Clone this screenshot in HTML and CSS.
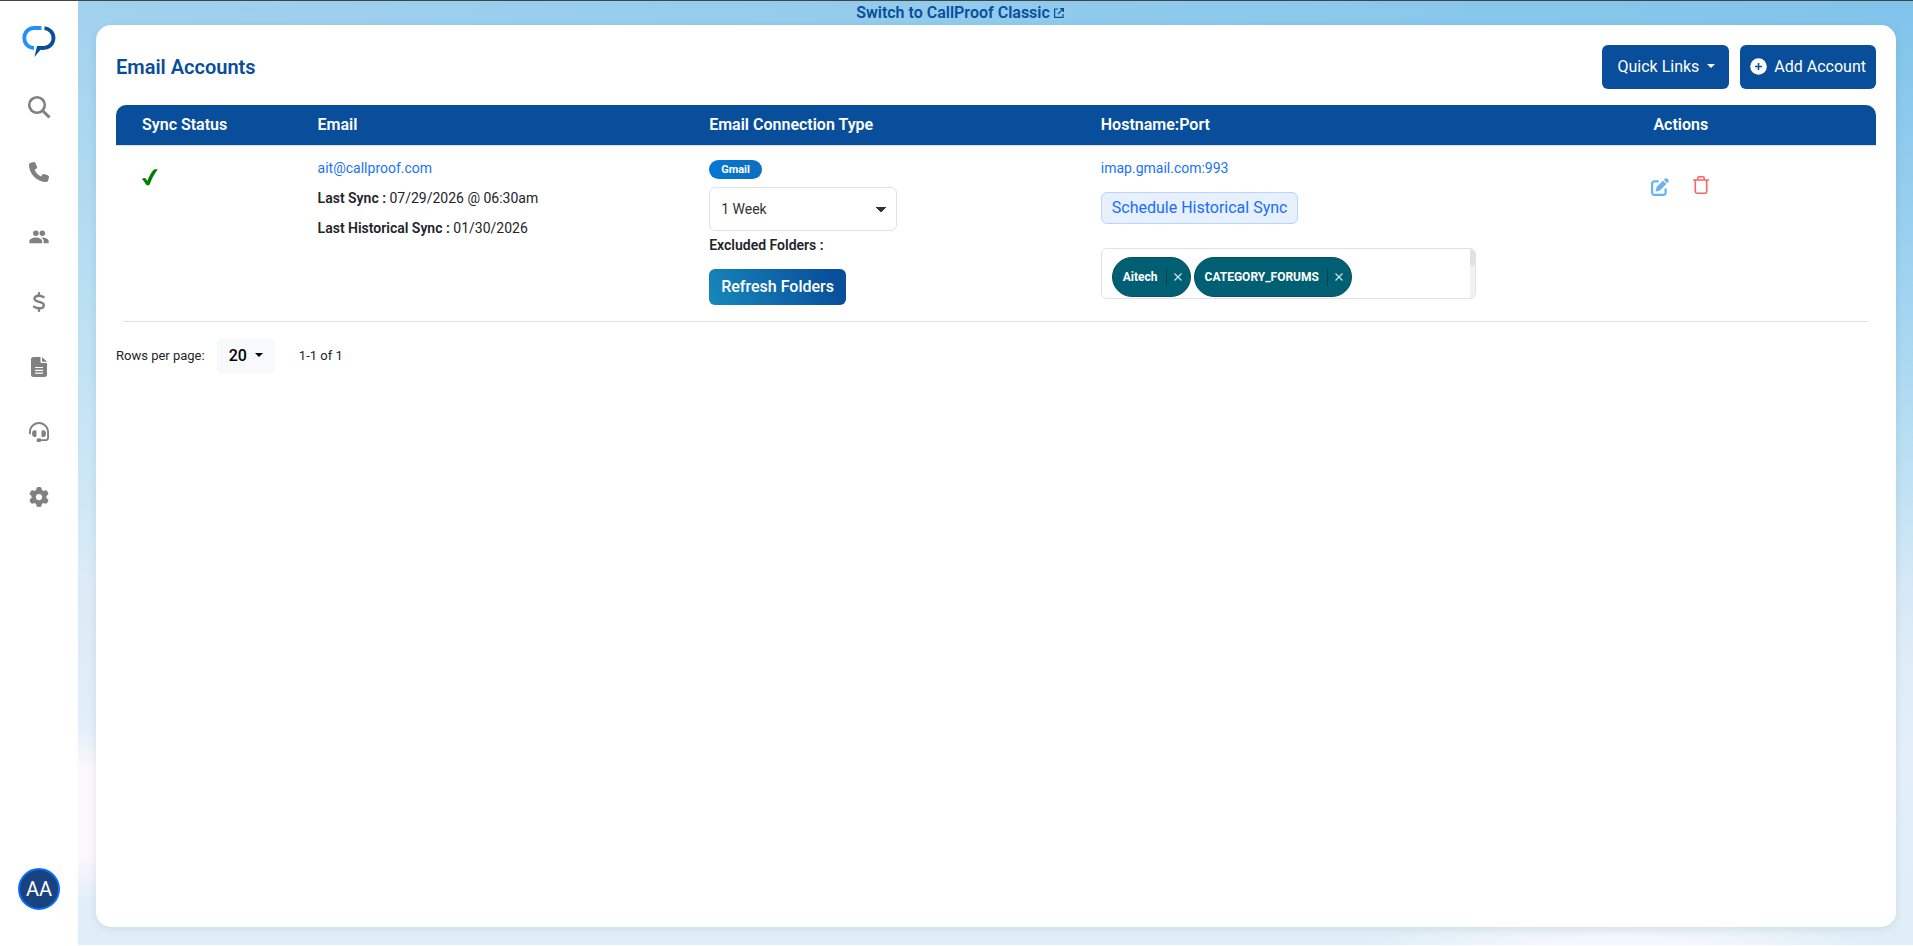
FILE: index.html
```html
<!DOCTYPE html>
<html lang="en">

<head>
    <meta charset="UTF-8">
    <meta name="viewport" content="width=device-width, initial-scale=1.0">
    <title>Email Accounts</title>
    <link rel="stylesheet" href="styles.css">
</head>

<body>
    <nav class="sidebar">
        <a href="#" class="logo" aria-label="CallProof">
            <svg width="34" height="32" viewBox="0 0 34 32">
                <path d="M19.500 3H12C6.500 3 2.300 7.500 2.300 13s4 9.700 9.700 10" fill="none" stroke="#2490fb" stroke-width="3.800" />
                <path d="M22.500 3.200c5 .5 9 4.300 9 9.800s-4 9.500-9.500 9.800h-5" fill="none" stroke="#084e9a" stroke-width="3.800" />
                <path d="M15 20.900h7v3.800h-3.500L12.500 32z" fill="#084e9a" />
            </svg>
        </a>
        <ul class="menu">
            <li><a href="#" aria-label="Search">
                <svg width="24" height="24" viewBox="0 0 24 24" fill="none" stroke="#808080">
                    <circle cx="10" cy="10" r="7.800" stroke-width="2.600" />
                    <path d="M15.500 15.500L22.500 22.500" stroke-width="3" />
                </svg>
            </a></li>
            <li><a href="#" aria-label="Calls">
                <svg width="20" height="20" viewBox="0 0 512 512" fill="#808080">
                    <path d="M164.900 24.600c-7.700-18.600-28-28.500-47.400-23.200l-88 24C12.100 30.200 0 46 0 64c0 247.400 200.600 448 448 448c18 0 33.800-12.100 38.600-29.500l24-88c5.300-19.400-4.600-39.700-23.200-47.400l-96-40c-16.300-6.800-35.200-2.100-46.300 11.600L304.700 368C234.300 334.700 177.300 277.700 144 207.300L193.300 167c13.700-11.200 18.400-30 11.600-46.300l-40-96z" />
                </svg>
            </a></li>
            <li><a href="#" aria-label="Contacts">
                <svg width="20" height="20" viewBox="0 0 24 24" fill="#808080">
                    <circle cx="8.200" cy="7.500" r="3.300" />
                    <circle cx="16" cy="7.500" r="3.300" />
                    <path d="M8.200 12.500c-3 0-7.700 1.500-7.700 4.300V19.500h15.300v-2.700c0-2.800-4.600-4.300-7.600-4.300z" />
                    <path d="M16 12.500c-.5 0-.9 0-1.300.1 1.700 1 2.900 2.400 2.900 4.200v2.700h6v-2.700c0-2.800-4.600-4.300-7.600-4.300z" />
                </svg>
            </a></li>
            <li><a href="#" aria-label="Deals">
                <svg width="14" height="20" viewBox="0 0 14 20" fill="none" stroke="#808080" stroke-width="2.400" stroke-linecap="round">
                    <path d="M7 1.200v2.500M7 16.300v2.500" />
                    <path d="M11.500 5C10 4 8.500 3.700 6.700 3.700c-2.600 0-4.200 1.200-4.200 3 0 4 9.300 2.500 9.300 6.500 0 2-1.800 3.100-4.500 3.100-2 0-3.700-.5-5.300-1.500" />
                </svg>
            </a></li>
            <li><a href="#" aria-label="Reports">
                <svg width="16" height="20" viewBox="0 0 16 20" fill="#808080">
                    <path d="M2.500 0H9.500V5a1 1 0 0 0 1 1H16V17.500a2.500 2.500 0 0 1-2.500 2.500h-11A2.500 2.500 0 0 1 0 17.500v-15A2.500 2.500 0 0 1 2.500 0z" />
                    <path d="M11 0L16 4.800H11z" />
                    <path d="M4 10.500h8M4 13.300h8M4 16.100h8" stroke="#fff" stroke-width="1.200" />
                </svg>
            </a></li>
            <li><a href="#" aria-label="Support">
                <svg width="20" height="20" viewBox="0 0 512 512" fill="#808080">
                    <path d="M256 48C141.100 48 48 141.100 48 256v40c0 13.300-10.700 24-24 24s-24-10.700-24-24V256C0 114.600 114.600 0 256 0S512 114.600 512 256V400.100c0 48.600-39.400 88-88.100 88L313.600 488c-8.300 14.300-23.800 24-41.600 24H240c-26.500 0-48-21.500-48-48s21.500-48 48-48h32c17.800 0 33.300 9.700 41.600 24l110.400 .1c22.100 0 40-17.900 40-40V256c0-114.900-93.100-208-208-208zM144 208h16c17.700 0 32 14.300 32 32V352c0 17.700-14.300 32-32 32H144c-35.300 0-64-28.700-64-64V272c0-35.300 28.700-64 64-64zm224 0c35.300 0 64 28.700 64 64v48c0 35.300-28.700 64-64 64H352c-17.700 0-32-14.300-32-32V240c0-17.700 14.300-32 32-32h16z" />
                </svg>
            </a></li>
            <li><a href="#" aria-label="Settings">
                <svg width="20" height="20" viewBox="0 0 512 512" fill="#808080">
                    <path d="M495.900 166.600c3.200 8.700 .5 18.400-6.400 24.600l-43.300 39.400c1.100 8.300 1.700 16.800 1.700 25.400s-.6 17.100-1.700 25.400l43.300 39.400c6.900 6.200 9.600 15.900 6.400 24.600c-4.400 11.900-9.700 23.300-15.800 34.300l-4.700 8.100c-6.600 11-14 21.400-22.100 31.200c-5.900 7.200-15.700 9.600-24.500 6.800l-55.700-17.700c-13.400 10.300-28.200 18.900-44 25.400l-12.500 57.100c-2 9.100-9 16.300-18.200 17.800c-13.800 2.300-28 3.500-42.500 3.500s-28.700-1.200-42.500-3.500c-9.200-1.500-16.200-8.700-18.200-17.800l-12.500-57.100c-15.800-6.500-30.600-15.100-44-25.400L83.100 425.900c-8.800 2.800-18.600 .3-24.500-6.800c-8.100-9.800-15.500-20.200-22.100-31.200l-4.700-8.100c-6.100-11-11.400-22.400-15.800-34.300c-3.200-8.700-.5-18.400 6.400-24.600l43.300-39.400C64.600 273.100 64 264.600 64 256s.6-17.100 1.700-25.400L22.400 191.200c-6.900-6.200-9.600-15.900-6.400-24.600c4.400-11.900 9.700-23.300 15.800-34.300l4.700-8.100c6.600-11 14-21.400 22.100-31.200c5.900-7.200 15.700-9.600 24.500-6.800l55.700 17.700c13.400-10.300 28.200-18.900 44-25.400l12.500-57.100c2-9.100 9-16.300 18.200-17.800C227.300 1.200 241.500 0 256 0s28.700 1.200 42.500 3.500c9.200 1.500 16.200 8.700 18.200 17.800l12.500 57.100c15.800 6.500 30.600 15.100 44 25.400l55.700-17.700c8.800-2.800 18.600-.3 24.500 6.800c8.100 9.800 15.500 20.200 22.100 31.200l4.700 8.100c6.100 11 11.400 22.400 15.800 34.300zM256 336a80 80 0 1 0 0-160 80 80 0 1 0 0 160z" />
                </svg>
            </a></li>
        </ul>
        <button type="button" class="avatar">AA</button>
    </nav>

    <div class="main">
        <a href="#" class="classic">Switch to CallProof Classic
            <svg width="10" height="10" viewBox="0 0 10 10" fill="none" stroke="currentColor" stroke-width="1.200">
                <path d="M4 1H.6v8.400H9V6M6 .6h3.400V4M9.400.6L4 6" />
            </svg>
        </a>
        <main class="card">
            <div class="card-head">
                <h1>Email Accounts</h1>
                <div class="buttons">
                    <button type="button" class="btn quick">Quick Links <span class="caret"></span></button>
                    <button type="button" class="btn add">
                        <svg width="17" height="17" viewBox="0 0 17 17">
                            <circle cx="8.500" cy="8.500" r="8.300" fill="#fff" />
                            <path d="M8.500 5v7M5 8.500h7" stroke="#084e9a" stroke-width="1.600" />
                        </svg>
                        Add Account
                    </button>
                </div>
            </div>

            <table class="accounts">
                <thead>
                    <tr>
                        <th class="col-status">Sync Status</th>
                        <th class="col-email">Email</th>
                        <th class="col-type">Email Connection Type</th>
                        <th class="col-host">Hostname:Port</th>
                        <th class="col-actions">Actions</th>
                    </tr>
                </thead>
                <tbody>
                    <tr>
                        <td class="status">
                            <svg width="16" height="17" viewBox="0 0 16 17" fill="#008000" role="img" aria-label="Synced">
                                <path d="M0 10.200C1.200 8.800 3 8.500 4 9.800L5.200 12C7 7.500 9.300 3.500 12 .6 13.200.2 14.500.2 15.700.4 12.500 4.500 9.800 9.500 7.800 15.200 6.800 16.600 5 16.800 4 15.600 2.800 13.400 1.500 11.500 0 10.200z" />
                            </svg>
                        </td>
                        <td>
                            <div class="lines">
                                <a href="#" class="link">ait@callproof.com</a>
                                <span><b>Last Sync :</b> 07/29/2026 @ 06:30am</span>
                                <span><b>Last Historical Sync :</b> 01/30/2026</span>
                            </div>
                        </td>
                        <td>
                            <div class="type">
                                <span class="badge">Gmail</span>
                                <select class="period" aria-label="Sync period">
                                    <option>1 Week</option>
                                </select>
                                <b class="excluded">Excluded Folders :</b>
                                <button type="button" class="refresh">Refresh Folders</button>
                            </div>
                        </td>
                        <td>
                            <div class="host">
                                <a href="#" class="link">imap.gmail.com:993</a>
                                <button type="button" class="schedule">Schedule Historical Sync</button>
                                <div class="folders">
                                    <div class="chips">
                                        <span class="chip">Aitech
                                            <button type="button" aria-label="Remove Aitech">
                                                <svg width="8" height="8" viewBox="0 0 8 8"><path d="M.5.5l7 7M7.500.5l-7 7" stroke="#cde0e4" stroke-width="1.300" /></svg>
                                            </button>
                                        </span>
                                        <span class="chip">CATEGORY_FORUMS
                                            <button type="button" aria-label="Remove CATEGORY_FORUMS">
                                                <svg width="8" height="8" viewBox="0 0 8 8"><path d="M.5.5l7 7M7.500.5l-7 7" stroke="#cde0e4" stroke-width="1.300" /></svg>
                                            </button>
                                        </span>
                                    </div>
                                    <div class="track"><div class="thumb"></div></div>
                                </div>
                            </div>
                        </td>
                        <td class="actions-cell">
                            <div class="actions">
                                <a href="#" aria-label="Edit">
                                    <svg width="18" height="18" viewBox="0 0 512 512" fill="#69b3f3">
                                        <path d="M471.600 21.700c-21.900-21.900-57.300-21.900-79.200 0L362.300 51.700l97.900 97.900 30.100-30.100c21.900-21.900 21.900-57.300 0-79.200L471.600 21.700zm-299.200 220c-6.100 6.100-10.800 13.600-13.500 21.900l-29.600 88.800c-2.900 8.600-.6 18.100 5.800 24.600s15.900 8.700 24.600 5.800l88.800-29.600c8.200-2.700 15.700-7.400 21.900-13.500L437.700 172.300 339.700 74.300 172.400 241.700zM96 64C43 64 0 107 0 160V416c0 53 43 96 96 96H352c53 0 96-43 96-96V320c0-17.700-14.300-32-32-32s-32 14.300-32 32v96c0 17.700-14.300 32-32 32H96c-17.700 0-32-14.300-32-32V160c0-17.700 14.300-32 32-32h96c17.700 0 32-14.300 32-32s-14.300-32-32-32H96z" />
                                    </svg>
                                </a>
                                <a href="#" aria-label="Delete">
                                    <svg width="16" height="18" viewBox="0 0 16 18" fill="none" stroke="#ff6464" stroke-width="1.600">
                                        <path d="M0 4h16M4.800 3.800V2.200A1.400 1.400 0 0 1 6.200.8h3.600a1.400 1.400 0 0 1 1.400 1.400v1.600M2.300 4v11.500a1.700 1.700 0 0 0 1.700 1.700h8a1.700 1.700 0 0 0 1.700-1.700V4" />
                                    </svg>
                                </a>
                            </div>
                        </td>
                    </tr>
                </tbody>
            </table>

            <div class="pager">
                <span>Rows per page:</span>
                <button type="button" class="rows">20 <span class="caret"></span></button>
                <span>1-1 of 1</span>
            </div>
        </main>
    </div>
</body>

</html>
```
FILE: styles.css
```css
* {
    box-sizing: border-box;
    margin: 0;
    padding: 0;
}

body {
    display: flex;
    height: 100vh;
    border-top: 1px solid #444;
    border-bottom: 1px solid #fff;
    font-family: Roboto, "Liberation Sans", sans-serif;
    font-size: 14px;
    line-height: 20px;
    color: #212529;
    background: #fff;
}

button,
select {
    font-family: inherit;
    cursor: pointer;
}

a {
    text-decoration: none;
}

svg {
    display: block;
}

/* sidebar */
.sidebar {
    display: flex;
    flex-direction: column;
    align-items: center;
    flex: none;
    width: 78px;
    padding: 24px 0 35px;
}

.menu {
    display: flex;
    flex-direction: column;
    gap: 25px;
    margin-top: 30px;
    list-style: none;
}

.menu a {
    display: flex;
    align-items: center;
    justify-content: center;
    width: 40px;
    height: 40px;
}

.avatar {
    width: 42px;
    height: 42px;
    margin-top: auto;
    border: 2px solid #0d6efd;
    border-radius: 50%;
    background: #194380;
    color: #fff;
    font-size: 20px;
}

/* sky */
.main {
    display: flex;
    flex-direction: column;
    flex: 1;
    min-width: 0;
    padding: 0 17px 18px 18px;
    background:
        radial-gradient(ellipse 60px 90px at 0 86%, #faf8fc 50%, transparent),
        radial-gradient(ellipse 260px 24px at 84% 100%, #f4f7fb 30%, transparent),
        radial-gradient(ellipse 100% 70% at 100% 0, rgba(80, 175, 230, 0.4), transparent),
        linear-gradient(#a0d1ee, #b8def3 30%, #cbe7f5 50%, #dcebf7 62%, #e3eef8 80%, #e0eef7);
}

.classic {
    display: flex;
    align-items: center;
    justify-content: center;
    gap: 4px;
    height: 24px;
    padding-right: 72px;
    color: #084e9a;
    font-size: 16px;
    font-weight: 600;
}

.card {
    flex: 1;
    padding: 20px;
    border-radius: 15px;
    background: #fff;
    box-shadow: 0 2px 8px rgba(0, 0, 0, 0.08);
}

.card-head {
    display: flex;
    align-items: center;
    justify-content: space-between;
    margin-bottom: 16px;
}

h1 {
    color: #084e9a;
    font-size: 20px;
    font-weight: 600;
}

.buttons {
    display: flex;
    gap: 11px;
}

.btn {
    display: flex;
    align-items: center;
    height: 44px;
    border: 0;
    border-radius: 6px;
    background: #084e9a;
    color: #fff;
    font-size: 16px;
}

.quick {
    gap: 8px;
    padding: 0 14px 2px 15px;
}

.add {
    gap: 7px;
    padding: 0 10px 2px;
}

.caret {
    border: 4px solid transparent;
    border-top-color: currentColor;
    border-bottom: 0;
}

/* table */
.accounts {
    width: 100%;
    table-layout: fixed;
    border-collapse: separate;
    border-spacing: 0;
}

th {
    height: 40px;
    padding: 0 8px;
    background: #084e9a;
    color: #fff;
    font-size: 16px;
    font-weight: 600;
    text-align: left;
}

th:first-child {
    padding-left: 26px;
    border-top-left-radius: 10px;
}

th:last-child {
    border-top-right-radius: 10px;
}

.col-status {
    width: 11%;
}

.col-email,
.col-type {
    width: 22.25%;
}

.col-host {
    width: 31.4%;
}

td {
    padding: 14px 8px 17px;
    border-top: 1px solid #dee2e6;
    vertical-align: top;
}

td.status {
    padding: 23px 0 0 26px;
}

tbody tr {
    background: linear-gradient(#dee2e6, #dee2e6) center bottom / calc(100% - 14px) 1px no-repeat;
}

b {
    font-weight: 600;
}

.link {
    color: #1a73f8;
}

.lines {
    display: flex;
    flex-direction: column;
    gap: 10px;
}

.lines,
.host {
    margin-top: -2px;
}

.type,
.host {
    display: flex;
    flex-direction: column;
    align-items: flex-start;
}

.badge {
    padding: 0 12px;
    border-radius: 10px;
    background: linear-gradient(to right, #0078d4, #106ebe);
    color: #fff;
    font-size: 11px;
    font-weight: 700;
    line-height: 19px;
}

.period {
    appearance: none;
    width: 188px;
    height: 44px;
    margin: 8px 0 4px;
    padding: 0 11px;
    border: 1px solid #dee2e6;
    border-radius: 6px;
    background: conic-gradient(from -45deg at 50% 100%, #333 90deg, transparent 0) right 10px center / 10px 5px no-repeat;
    color: #333;
    font-size: 14px;
}

.refresh {
    height: 36px;
    margin-top: 14px;
    padding: 0 12px 2px;
    border: 0;
    border-radius: 6px;
    background: linear-gradient(60deg, #1789bb, #084e9a 90%);
    color: #fff;
    font-size: 16px;
    font-weight: 500;
}

.schedule {
    height: 32px;
    margin: 14px 0 24px;
    padding: 0 10px 2px;
    border: 1px solid #b9d4ff;
    border-radius: 6px;
    background: #e7f0ff;
    color: #1a6dfb;
    font-size: 16px;
}

.folders {
    display: flex;
    justify-content: space-between;
    width: 375px;
    max-width: 100%;
    height: 51px;
    border: 1px solid #dee2e6;
    border-radius: 6px;
    overflow: hidden;
}

.chips {
    display: flex;
    gap: 3px;
    padding: 8px 10px 0;
}

.chip {
    display: flex;
    align-items: center;
    gap: 8px;
    height: 40px;
    padding: 0 8px 0 10px;
    border: 1px solid #07515f;
    border-radius: 20px;
    background: #005f73;
    color: #fff;
    font-size: 12px;
    font-weight: 700;
}

.chip button {
    width: 16px;
    height: 18px;
    padding-left: 7px;
    border: 0;
    border-left: 1px solid #07414e;
    background: none;
}

.track {
    width: 5px;
    background: #f1f1f1;
}

.thumb {
    height: 17px;
    background: #dee2e6;
    border-radius: 3px;
}

td.actions-cell {
    padding-left: 6px;
}

.actions {
    display: flex;
    gap: 24px;
    padding-top: 16px;
}

.actions a:first-child {
    padding-top: 2px;
}

/* pager */
.pager {
    display: flex;
    align-items: center;
    margin-top: 16px;
    font-size: 13px;
}

.rows {
    display: flex;
    align-items: center;
    gap: 8px;
    height: 36px;
    margin: 0 24px 0 12px;
    padding: 0 12px 2px;
    border: 0;
    border-radius: 6px;
    background: #f8f9fa;
    color: #000;
    font-size: 16px;
    font-weight: 500;
}
```
